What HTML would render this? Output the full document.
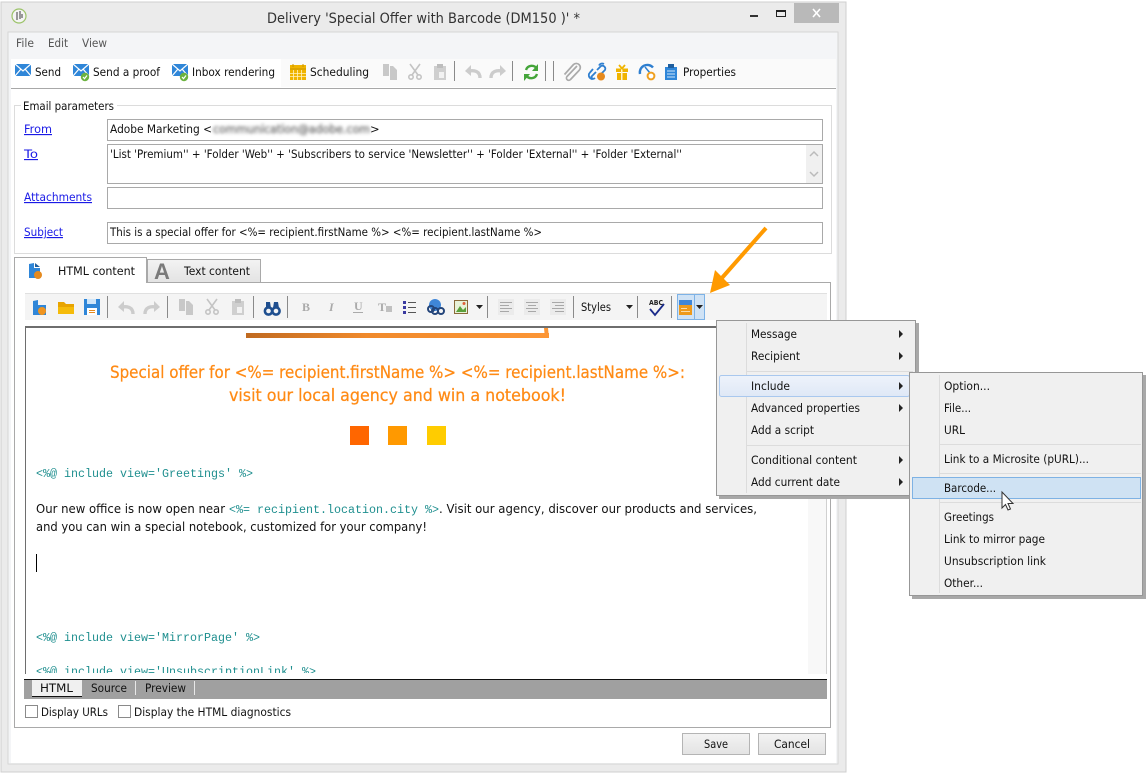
<!DOCTYPE html>
<html><head><meta charset="utf-8"><title>Delivery</title>
<style>
html,body{margin:0;padding:0;background:#fff;width:1148px;height:780px;overflow:hidden}
svg{display:block}
text{font-family:"DejaVu Sans","Liberation Sans",sans-serif;font-size:11.5px;fill:#111;white-space:pre}
.r rect,.r line{shape-rendering:crispEdges}
.l{fill:#1a1ae6;text-decoration:underline}
.c{font-family:"Liberation Mono",monospace;font-size:11.5px;fill:#1f8f8f}
.b{font-family:"DejaVu Sans",sans-serif;font-size:12px;fill:#111}
.h{font-family:"DejaVu Sans",sans-serif;font-size:17px;fill:#ff8a14;stroke:#ff8a14;stroke-width:.25px}
</style></head><body>
<svg width="1148" height="780" viewBox="0 0 1148 780" xmlns="http://www.w3.org/2000/svg">
<defs>
<linearGradient id="bar" x1="0" x2="1" y1="0" y2="0"><stop offset="0" stop-color="#c06a20"/><stop offset=".4" stop-color="#f08a2c"/><stop offset="1" stop-color="#fc9636"/></linearGradient>
<linearGradient id="btn" x1="0" x2="0" y1="0" y2="1"><stop offset="0" stop-color="#f3f3f3"/><stop offset="1" stop-color="#e3e3e3"/></linearGradient>
<linearGradient id="inc" x1="0" x2="0" y1="0" y2="1"><stop offset="0" stop-color="#eef3fb"/><stop offset="1" stop-color="#dfe8f6"/></linearGradient>
<filter id="bl" x="-5%" y="-50%" width="110%" height="200%"><feGaussianBlur stdDeviation="1.5"/></filter>
<g id="mail"><rect x="0" y="0" width="16" height="12" fill="#2f86d8"/><path d="M0 0L8 7L16 0M0 12L6 5M16 12L10 5" fill="none" stroke="#fff" stroke-width="1.2"/></g>
<g id="chk"><circle cx="0" cy="0" r="4.2" fill="#6cb33f"/><path d="M-2 0L-.5 1.7L2 -1.5" fill="none" stroke="#fff" stroke-width="1.2"/></g>
<g id="copy" fill="#c8c8c8"><rect x="0" y="0" width="6" height="12"/><path d="M7 2H10L14 6V16H7Z"/></g>
<g id="sc" fill="none" stroke="#c4c4c4" stroke-width="1.6"><path d="M2 0L10 11M12 0L4 11"/><circle cx="3" cy="13" r="2.2"/><circle cx="11" cy="13" r="2.2"/></g>
<g id="paste"><rect x="0" y="2" width="12" height="14" fill="#cfcfcf"/><rect x="3" y="0" width="6" height="4" fill="#bdbdbd"/><rect x="5" y="8" width="5" height="6" fill="#f2f2f2"/></g>
<g id="undo"><path d="M15 13C15 6 9 5 4 6" fill="none" stroke="#cccccc" stroke-width="3.4"/><path d="M0 6L6 0V11Z" fill="#cccccc"/></g>
<g id="redo"><path d="M1 13C1 6 7 5 12 6" fill="none" stroke="#cccccc" stroke-width="3.4"/><path d="M16 6L10 0V11Z" fill="#cccccc"/></g>
<path id="da" d="M0 0H7L3.5 4Z" fill="#222"/>
<path id="ma" d="M0 0L4 4L0 8Z" fill="#222"/>
</defs>

<g class="r">
<rect x="1" y="2" width="845" height="770" fill="#ebebeb" stroke="#cfcfcf"/>
<rect x="8" y="32" width="830" height="732" fill="#f4f5f7" stroke="#d6d6d6"/>
<rect x="11" y="59" width="825" height="704" fill="#fff"/>
<rect x="281" y="59" width="555" height="28" fill="#fafafa"/>
<rect x="11" y="88" width="825" height="1" fill="#a8a8a8"/>
<rect x="794" y="3" width="45" height="20" fill="#b9b9b9"/>
<rect x="750" y="15" width="8" height="2" fill="#333"/>
<rect x="776.5" y="10.5" width="9" height="6" fill="none" stroke="#222"/><rect x="776" y="10" width="10" height="2" fill="#222"/>
</g>
<path d="M813 9L820 17M820 9L813 17" stroke="#fff" stroke-width="1.6"/>
<circle cx="19" cy="16" r="7" fill="#f4f4f4" stroke="#9cc36a" stroke-width="1.2"/>
<path d="M17 12V20M20 11V19M22 14V18" stroke="#666" stroke-width="1.3"/>
<text x="267" y="23" style="font-size:14.5px;fill:#333" textLength="313" lengthAdjust="spacingAndGlyphs">Delivery 'Special Offer with Barcode (DM150 )' *</text>

<text x="16" y="47" style="fill:#555" textLength="18" lengthAdjust="spacingAndGlyphs">File</text>
<text x="48" y="47" style="fill:#555" textLength="20" lengthAdjust="spacingAndGlyphs">Edit</text>
<text x="82" y="47" style="fill:#555" textLength="25" lengthAdjust="spacingAndGlyphs">View</text>

<use href="#mail" x="15" y="64"/>
<text x="35" y="76" textLength="26" lengthAdjust="spacingAndGlyphs">Send</text>
<use href="#mail" x="73" y="64"/><use href="#chk" x="85" y="77"/>
<text x="93" y="76" textLength="67" lengthAdjust="spacingAndGlyphs">Send a proof</text>
<use href="#mail" x="172" y="64"/><use href="#chk" x="184" y="77"/>
<text x="192" y="76" textLength="83" lengthAdjust="spacingAndGlyphs">Inbox rendering</text>
<rect x="290" y="65" width="16" height="15" fill="#f0b400"/><path d="M290 69H306M293 64V67M303 64V67" stroke="#c99400" stroke-width="1"/><path d="M293.5 70V80M297.5 70V80M301.5 70V80M290 73.5H306M290 76.5H306" stroke="#fff2c0" stroke-width=".8"/>
<text x="310" y="76" textLength="59" lengthAdjust="spacingAndGlyphs">Scheduling</text>
<use href="#copy" x="383" y="64"/><use href="#sc" x="408" y="64"/><use href="#paste" x="434" y="64"/>
<g class="r"><rect x="454" y="61" width="1" height="20" fill="#8a8a8a"/><rect x="512" y="61" width="1" height="20" fill="#8a8a8a"/><rect x="545" y="61" width="1" height="20" fill="#8a8a8a"/><rect x="553" y="61" width="1" height="20" fill="#8a8a8a"/></g>
<use href="#undo" x="465" y="65"/><use href="#redo" x="490" y="65"/>
<path d="M526 70A6 6 0 0 1 537 69M537 74A6 6 0 0 1 526 75" fill="none" stroke="#45a53a" stroke-width="2.4"/><path d="M538 64V71H532ZM524 81V74H530Z" fill="#45a53a"/>
<path d="M577 66L567 76.5A2.3 2.3 0 0 0 570.5 79.5L579 70.5A4 4 0 0 0 573.5 64.5L564.5 74.5" fill="none" stroke="#aaa" stroke-width="1.7"/>
<path d="M596 72L591.5 76.5A2.5 2.5 0 0 1 591 79.5M593 69L590 72.500A3.500 3.500 0 0 0 595 78M597 70L601 66A3 3 0 0 1 605 70L601 74M599 65.500A3.500 3.500 0 0 1 604 64" fill="none" stroke="#2f7fd0" stroke-width="1.800"/><circle cx="601" cy="76.500" r="4" fill="#e58a1f"/>
<rect x="616" y="68.500" width="12" height="3.500" fill="#f0b400"/><rect x="617" y="73" width="10" height="7" fill="#f0b400"/><rect x="621" y="69" width="1.500" height="11" fill="#fff3c8"/><path d="M619 65L622 68.500L625 65" fill="none" stroke="#f0b400" stroke-width="1.800"/>
<path d="M640 74A7.500 7.500 0 0 1 653 67.500" fill="none" stroke="#2f7fd0" stroke-width="2.400"/><path d="M645 67L650 73" stroke="#2f7fd0" stroke-width="1.500"/><circle cx="651" cy="76" r="3.400" fill="#fff" stroke="#f0a020" stroke-width="2"/>
<rect x="665" y="67" width="12" height="13" fill="#2f86d8"/><rect x="668" y="64" width="6" height="4" fill="#1f5f9f"/><path d="M667 71H675M667 74H675M667 77H675" stroke="#cfe6fa" stroke-width="1"/>
<text x="683" y="76" textLength="53" lengthAdjust="spacingAndGlyphs">Properties</text>

<g class="r">
<rect x="14.5" y="105.5" width="817" height="148" fill="none" stroke="#dcdcdc"/>
<rect x="21" y="100" width="96" height="10" fill="#fff"/>
<rect x="107.5" y="119.5" width="715" height="21" fill="#fff" stroke="#a9a9a9"/>
<rect x="107.5" y="144.5" width="715" height="39" fill="#fff" stroke="#a9a9a9"/>
<rect x="806" y="145" width="16" height="38" fill="#f0f0f0"/>
<rect x="107.5" y="187.5" width="715" height="21" fill="#fff" stroke="#a9a9a9"/>
<rect x="107.5" y="222.5" width="715" height="21" fill="#fff" stroke="#a9a9a9"/>
</g>
<path d="M810 156L814 152L818 156M810 172L814 176L818 172" fill="none" stroke="#bbb" stroke-width="1.5"/>
<text x="23" y="110" textLength="91" lengthAdjust="spacingAndGlyphs">Email parameters</text>
<text class="l" x="24" y="133" textLength="28" lengthAdjust="spacingAndGlyphs">From</text>
<text class="l" x="24" y="158" textLength="14" lengthAdjust="spacingAndGlyphs">To</text>
<text class="l" x="24" y="201" textLength="68" lengthAdjust="spacingAndGlyphs">Attachments</text>
<text class="l" x="24" y="236" textLength="39" lengthAdjust="spacingAndGlyphs">Subject</text>
<text x="110" y="133" textLength="102" lengthAdjust="spacingAndGlyphs">Adobe Marketing &lt;</text>
<text x="213" y="133" filter="url(#bl)" style="fill:#666;stroke:#888;stroke-width:.5px" textLength="157" lengthAdjust="spacingAndGlyphs">communication@adobe.com</text>
<text x="370" y="133">&gt;</text>
<text x="110" y="158" textLength="572" lengthAdjust="spacingAndGlyphs">'List 'Premium'' + 'Folder 'Web'' + 'Subscribers to service 'Newsletter'' + 'Folder 'External'' + 'Folder 'External''</text>
<text x="110" y="236" textLength="432" lengthAdjust="spacingAndGlyphs">This is a special offer for &lt;%= recipient.firstName %&gt; &lt;%= recipient.lastName %&gt;</text>

<g class="r">
<rect x="14.5" y="282.5" width="816" height="445" fill="#fff" stroke="#a9a9a9"/>
<rect x="147.5" y="259.5" width="113" height="23" fill="url(#btn)" stroke="#a9a9a9"/>
<rect x="14.5" y="257.5" width="132" height="25" fill="#fff" stroke="#a9a9a9"/>
<rect x="15" y="281" width="131" height="3" fill="#fff"/>
<rect x="25" y="293" width="802" height="27" fill="#f4f4f4"/>
<rect x="25" y="293" width="802" height="1" fill="#e0e0e0"/>
<rect x="25" y="326" width="802" height="348" fill="#fff"/>
<rect x="808" y="328" width="18" height="346" fill="#f8f8f8"/>
<rect x="25" y="326" width="802" height="2" fill="#6e6e6e"/>
<rect x="25" y="326" width="1" height="348" fill="#6e6e6e"/>
<rect x="826" y="326" width="1" height="348" fill="#d0d0d0"/>
</g>
<path d="M29 264L34 263V268H40V278H29Z" fill="#2f86d8"/><path d="M35 263L40 267H35Z" fill="#1f5f9f"/><circle cx="38" cy="275" r="4" fill="#e58a1f"/>
<text x="58" y="275" textLength="77" lengthAdjust="spacingAndGlyphs">HTML content</text>
<text x="154" y="279" style="font-family:'Liberation Sans',sans-serif;font-size:22px;font-weight:bold;fill:#7a7a7a">A</text>
<text x="184" y="275" textLength="66" lengthAdjust="spacingAndGlyphs">Text content</text>

<path d="M33 301L38 300V305H46V315H33Z" fill="#2f86d8"/><circle cx="42" cy="311" r="4" fill="#f0941f"/>
<path d="M58 302H64L66 304H74V308H58Z" fill="#e8a400"/><rect x="58" y="307" width="16" height="7" fill="#f5bb0a"/>
<rect x="84" y="299" width="16" height="16" fill="#2f86d8"/><rect x="87" y="299" width="9" height="5" fill="#cfe6fa"/><rect x="87" y="308" width="10" height="7" fill="#fff"/><rect x="89" y="310" width="6" height="1" fill="#e58a1f"/><rect x="89" y="312" width="6" height="1" fill="#e58a1f"/>
<use href="#undo" x="118" y="301"/><use href="#redo" x="144" y="301"/>
<use href="#copy" x="179" y="299"/><use href="#sc" x="205" y="299"/><use href="#paste" x="232" y="299"/>
<g class="r" fill="#8a8a8a"><rect x="107" y="296" width="1" height="22"/><rect x="167" y="296" width="1" height="22"/><rect x="253" y="296" width="1" height="22"/><rect x="287" y="296" width="1" height="22"/><rect x="487" y="296" width="1" height="22"/><rect x="573" y="296" width="1" height="22"/><rect x="637" y="296" width="1" height="22"/><rect x="671" y="296" width="1" height="22"/></g>
<circle cx="268.5" cy="311" r="3.6" fill="none" stroke="#1f4f8f" stroke-width="2.6"/><circle cx="276" cy="311" r="3.6" fill="none" stroke="#1f4f8f" stroke-width="2.6"/><path d="M266 302H270L271 308H266ZM274 302H278L279 308H273Z" fill="#1f4f8f"/>
<text x="302" y="311" style="font-family:'Liberation Serif',serif;font-size:12px;font-weight:bold;fill:#aaa">B</text>
<text x="329" y="311" style="font-family:'Liberation Serif',serif;font-size:12px;font-style:italic;font-weight:bold;fill:#aaa">I</text>
<text x="354" y="310" style="font-family:'Liberation Serif',serif;font-size:12px;font-weight:bold;fill:#aaa">U</text>
<rect x="353" y="312" width="10" height="1" fill="#aaa"/>
<text x="378" y="311" style="font-family:'Liberation Serif',serif;font-size:12px;font-weight:bold;fill:#aaa">T</text>
<rect x="386" y="306" width="6" height="6" fill="#c0c0c0"/>
<g class="r" fill="#3a3aa0"><rect x="403" y="301" width="3" height="3"/><rect x="403" y="306" width="3" height="3"/><rect x="403" y="311" width="3" height="3"/></g>
<path d="M408 302.5H416M408 307.5H416M408 312.5H416" stroke="#555" stroke-width="1"/>
<circle cx="435" cy="305" r="6" fill="#3f86d8"/><circle cx="435" cy="311" r="3" fill="none" stroke="#24457a" stroke-width="2"/><circle cx="441" cy="311" r="3" fill="none" stroke="#24457a" stroke-width="2"/><circle cx="431" cy="309" r="3" fill="none" stroke="#24457a" stroke-width="2"/>
<rect x="454.5" y="300.5" width="13" height="13" fill="#e8f2d8" stroke="#8a6a3a"/><path d="M456 312L460 306L463 310L466 307V312Z" fill="#5aa03a"/><circle cx="464" cy="303.5" r="1.5" fill="#e0603a"/>
<use href="#da" x="476" y="305"/>
<g class="r"><rect x="498" y="299" width="16" height="16" fill="#ebebeb"/><rect x="524" y="299" width="16" height="16" fill="#ebebeb"/><rect x="550" y="299" width="16" height="16" fill="#ebebeb"/></g>
<path d="M500 302.5H512M500 305.5H509M500 308.5H512M500 311.5H509M526 302.5H538M528 305.5H536M526 308.5H538M528 311.5H536M552 302.5H564M555 305.5H564M552 308.5H564M555 311.5H564" stroke="#a8a8a8"/>
<text x="581" y="311" textLength="30" lengthAdjust="spacingAndGlyphs">Styles</text>
<use href="#da" x="626" y="305"/>
<text x="649" y="305" style="font-size:7px;font-weight:bold;fill:#222" textLength="14" lengthAdjust="spacingAndGlyphs">ABC</text>
<path d="M650 309L655 315L664 304" fill="none" stroke="#1a2a8a" stroke-width="1.8"/>
<g class="r"><rect x="677.5" y="294.5" width="27" height="25" fill="#cfe2f5" stroke="#7db2e6"/><rect x="694" y="294" width="1" height="25" fill="#7db2e6"/>
<rect x="679" y="300" width="13" height="5" fill="#3f86d8"/><rect x="679" y="305" width="13" height="10" fill="#ee9a1c"/><rect x="681" y="308" width="6" height="1" fill="#fbdca8"/><rect x="681" y="311" width="9" height="1" fill="#fbdca8"/></g>
<use href="#da" x="696" y="305"/>

<svg x="26" y="328" width="782" height="345" viewBox="26 328 782 345">
<g class="r"><rect x="246" y="333" width="303" height="5" fill="url(#bar)"/></g>
<path d="M544 328H548L549 338H545Z" fill="#fc9636"/>
<text class="h" x="110" y="378" textLength="575" lengthAdjust="spacingAndGlyphs">Special offer for &lt;%= recipient.firstName %&gt; &lt;%= recipient.lastName %&gt;:</text>
<text class="h" x="229" y="401" textLength="337" lengthAdjust="spacingAndGlyphs">visit our local agency and win a notebook!</text>
<g class="r"><rect x="350" y="426" width="19" height="19" fill="#ff6600"/><rect x="388" y="426" width="19" height="19" fill="#ff9900"/><rect x="427" y="426" width="19" height="19" fill="#ffcc00"/></g>
<text class="c" x="36" y="477" textLength="217" lengthAdjust="spacingAndGlyphs">&lt;%@ include view='Greetings' %&gt;</text>
<text class="b" x="36" y="513" textLength="189" lengthAdjust="spacingAndGlyphs">Our new office is now open near</text>
<text class="c" x="229" y="513" textLength="210" lengthAdjust="spacingAndGlyphs">&lt;%= recipient.location.city %&gt;</text>
<text class="b" x="439" y="513" textLength="318" lengthAdjust="spacingAndGlyphs">. Visit our agency, discover our products and services,</text>
<text class="b" x="36" y="531" textLength="391" lengthAdjust="spacingAndGlyphs">and you can win a special notebook, customized for your company!</text>
<g class="r"><rect x="36" y="554" width="1" height="18" fill="#000"/></g>
<text class="c" x="36" y="641" textLength="224" lengthAdjust="spacingAndGlyphs">&lt;%@ include view='MirrorPage' %&gt;</text>
<text class="c" x="36" y="675" textLength="280" lengthAdjust="spacingAndGlyphs">&lt;%@ include view='UnsubscriptionLink' %&gt;</text>
</svg>

<g class="r">
<rect x="24" y="679" width="803" height="20" fill="#a0a0a0"/>
<rect x="24" y="679" width="803" height="1" fill="#111"/>
<rect x="32" y="680" width="50" height="16" fill="#f0f0f0"/>
<rect x="32" y="696" width="50" height="1" fill="#111"/>
<rect x="135" y="681" width="1" height="14" fill="#e8e8e8"/>
<rect x="194" y="681" width="1" height="14" fill="#e8e8e8"/>
<rect x="25.5" y="705.5" width="12" height="12" fill="#fff" stroke="#8a8a8a"/>
<rect x="118.5" y="705.5" width="12" height="12" fill="#fff" stroke="#8a8a8a"/>
<rect x="682.5" y="733.5" width="67" height="21" fill="url(#btn)" stroke="#b4b4b4"/>
<rect x="758.5" y="733.5" width="67" height="21" fill="url(#btn)" stroke="#b4b4b4"/>
</g>
<text x="40" y="692" textLength="33" lengthAdjust="spacingAndGlyphs">HTML</text>
<text x="91" y="692" textLength="36" lengthAdjust="spacingAndGlyphs">Source</text>
<text x="145" y="692" textLength="41" lengthAdjust="spacingAndGlyphs">Preview</text>
<text x="41" y="716" textLength="67" lengthAdjust="spacingAndGlyphs">Display URLs</text>
<text x="134" y="716" textLength="157" lengthAdjust="spacingAndGlyphs">Display the HTML diagnostics</text>
<text x="704" y="748" textLength="24" lengthAdjust="spacingAndGlyphs">Save</text>
<text x="774" y="748" textLength="36" lengthAdjust="spacingAndGlyphs">Cancel</text>

<path d="M766 228L721 279" stroke="#ff9a00" stroke-width="4" fill="none"/>
<path d="M710 293L715 270L730 285Z" fill="#ff9a00"/>

<g class="r">
<rect x="719" y="323" width="200" height="176" fill="#a8a8a8"/>
<rect x="716.5" y="320.5" width="199" height="175" fill="#f0f0f0" stroke="#979797"/>
<rect x="746" y="323" width="1" height="170" fill="#dcdcdc"/>
<rect x="747" y="371" width="166" height="1" fill="#dcdcdc"/>
<rect x="747" y="445" width="166" height="1" fill="#dcdcdc"/>
</g>
<rect x="719.5" y="375.5" width="190" height="21" rx="2" fill="url(#inc)" stroke="#a9c8ee"/>
<text x="751" y="338" textLength="46" lengthAdjust="spacingAndGlyphs">Message</text>
<text x="751" y="360" textLength="49" lengthAdjust="spacingAndGlyphs">Recipient</text>
<text x="751" y="390" textLength="39" lengthAdjust="spacingAndGlyphs">Include</text>
<text x="751" y="412" textLength="109" lengthAdjust="spacingAndGlyphs">Advanced properties</text>
<text x="751" y="434" textLength="63" lengthAdjust="spacingAndGlyphs">Add a script</text>
<text x="751" y="464" textLength="106" lengthAdjust="spacingAndGlyphs">Conditional content</text>
<text x="751" y="486" textLength="89" lengthAdjust="spacingAndGlyphs">Add current date</text>
<use href="#ma" x="899" y="330"/><use href="#ma" x="899" y="352"/><use href="#ma" x="899" y="382"/><use href="#ma" x="899" y="404"/><use href="#ma" x="899" y="456"/><use href="#ma" x="899" y="478"/>

<g class="r">
<rect x="912" y="375" width="234" height="224" fill="#a8a8a8"/>
<rect x="909.5" y="372.5" width="233" height="223" fill="#f0f0f0" stroke="#979797"/>
<rect x="939" y="375" width="1" height="218" fill="#dcdcdc"/>
<rect x="940" y="444" width="201" height="1" fill="#dcdcdc"/>
<rect x="940" y="473" width="201" height="1" fill="#dcdcdc"/>
<rect x="940" y="502" width="201" height="1" fill="#dcdcdc"/>
<rect x="912.5" y="477.5" width="228" height="21" fill="#cfe2f3" stroke="#7eb2e4"/>
</g>
<text x="944" y="390" textLength="46" lengthAdjust="spacingAndGlyphs">Option...</text>
<text x="944" y="412" textLength="27" lengthAdjust="spacingAndGlyphs">File...</text>
<text x="944" y="434" textLength="21" lengthAdjust="spacingAndGlyphs">URL</text>
<text x="944" y="463" textLength="145" lengthAdjust="spacingAndGlyphs">Link to a Microsite (pURL)...</text>
<text x="944" y="492" textLength="52" lengthAdjust="spacingAndGlyphs">Barcode...</text>
<text x="944" y="521" textLength="50" lengthAdjust="spacingAndGlyphs">Greetings</text>
<text x="944" y="543" textLength="101" lengthAdjust="spacingAndGlyphs">Link to mirror page</text>
<text x="944" y="565" textLength="102" lengthAdjust="spacingAndGlyphs">Unsubscription link</text>
<text x="944" y="587" textLength="39" lengthAdjust="spacingAndGlyphs">Other...</text>
<path d="M1002 492V508L1005.5 504.5L1008 510L1010.5 509L1008 503.5L1013 503.5Z" fill="#fff" stroke="#333" stroke-width="1"/>
</svg>
</body></html>
